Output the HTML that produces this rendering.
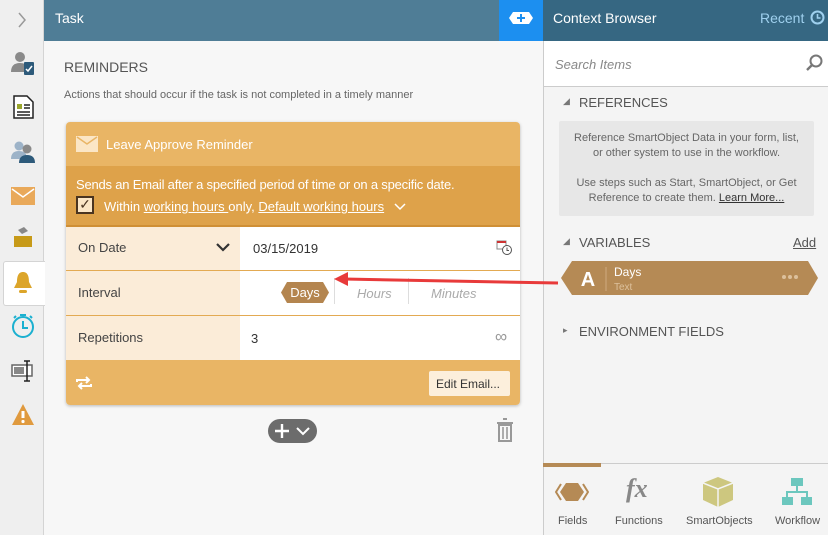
<!DOCTYPE html>
<html><head><style>
*{box-sizing:border-box;margin:0;padding:0}
body{width:828px;height:535px;overflow:hidden;font-family:"Liberation Sans",sans-serif;background:#f7f7f7;position:relative;font-size:13px;color:#444}
.a{position:absolute}
</style></head><body>
<!-- left sidebar -->
<div class="a" style="left:0;top:0;width:44px;height:535px;background:#efefef;border-right:1px solid #d4d4d4"></div>
<svg class="a" style="left:17px;top:11px" width="10" height="18"><path d="M2 2l6 7-6 7" stroke="#999" stroke-width="1.5" fill="none"/></svg>
<svg class="a" style="left:10px;top:50px" width="26" height="28"><circle cx="10" cy="7" r="5" fill="#8a8a8a"/><path d="M1 22 q0-9 9-9 q6 0 8 4 v5z" fill="#8a8a8a"/><rect x="14" y="12" width="10" height="13" rx="1" fill="#2d5a7a"/><path d="M16 19 l2 2 4-5" stroke="#fff" fill="none" stroke-width="1.5"/></svg>
<svg class="a" style="left:13px;top:95px" width="22" height="24"><path d="M1 1h13l6 6v16H1z" fill="#fff" stroke="#222" stroke-width="1.5"/><rect x="4" y="9" width="5" height="5" fill="#9aa62c"/><path d="M11 10h6M11 13h6M4 17h13M4 20h13" stroke="#222" stroke-width="1.5"/></svg>
<svg class="a" style="left:11px;top:140px" width="26" height="24"><circle cx="8" cy="6" r="4.5" fill="#9db3c8"/><path d="M0 19q0-8 8-8q5 0 7 3v5z" fill="#9db3c8"/><circle cx="16" cy="9" r="4.5" fill="#8a8a8a"/><path d="M8 23q0-8 8-8t8 8z" fill="#2d5a7a"/></svg>
<svg class="a" style="left:11px;top:187px" width="24" height="18"><rect width="24" height="18" fill="#e9a95a"/><path d="M1 2l11 8 11-8" stroke="#fff" fill="none" stroke-width="1.5"/></svg>
<svg class="a" style="left:13px;top:226px" width="20" height="22"><path d="M5 4l6-3 4 4-6 3z" fill="#888"/><rect x="1" y="10" width="18" height="11" fill="#c79a18"/></svg>
<div class="a" style="left:3px;top:261px;width:42px;height:45px;background:#fff;border:1px solid #d4d4d4;border-right:none;border-radius:3px 0 0 3px"></div>
<svg class="a" style="left:13px;top:270px" width="20" height="26"><path d="M10 2c-5 0-6 5-6 10l-3 6h18l-3-6c0-5-1-10-6-10z" fill="#dca52a"/><rect x="6" y="20" width="8" height="3" rx="1.5" fill="#dca52a"/></svg>
<svg class="a" style="left:11px;top:313px" width="24" height="26"><circle cx="12" cy="14" r="10" fill="none" stroke="#1bb0d0" stroke-width="2"/><path d="M12 8v7h5M9 2h6M3 5l2-2M21 5l-2-2" stroke="#1bb0d0" stroke-width="2" fill="none"/></svg>
<svg class="a" style="left:11px;top:360px" width="24" height="22"><rect x="1" y="5" width="20" height="11" fill="#fff" stroke="#666" stroke-width="1.5"/><rect x="3" y="7" width="10" height="7" fill="#888"/><path d="M16 1v20M13 1h6M13 21h6" stroke="#222" stroke-width="1.5"/></svg>
<svg class="a" style="left:11px;top:403px" width="24" height="24"><path d="M12 1l11 21H1z" fill="#e09a3e"/><path d="M12 8v7" stroke="#fff" stroke-width="3"/><circle cx="12" cy="18.5" r="1.6" fill="#fff"/></svg>

<!-- headers -->
<div class="a" style="left:44px;top:0;width:455px;height:41px;background:#4f7d96;color:#fff;font-size:14px;padding:10px 0 0 11px">Task</div>
<div class="a" style="left:499px;top:0;width:44px;height:41px;background:#1c8ff0"></div>
<svg class="a" style="left:508px;top:11px" width="26" height="14"><path d="M5 1h16l4 6-4 6H5L1 7z" fill="#fff"/><path d="M13 3v8M9 7h8" stroke="#1c8ff0" stroke-width="2"/></svg>
<div class="a" style="left:543px;top:0;width:285px;height:41px;background:#366782;color:#fff;font-size:14px;padding:10px 0 0 10px">Context Browser</div>
<div class="a" style="left:760px;top:10px;color:#9fd0ee;font-size:14px">Recent</div>
<svg class="a" style="left:810px;top:10px" width="15" height="15"><circle cx="7.5" cy="7.5" r="6" fill="none" stroke="#9fd0ee" stroke-width="2"/><path d="M7.5 4v4h3" stroke="#9fd0ee" stroke-width="1.6" fill="none"/></svg>

<!-- main -->
<div class="a" style="left:64px;top:59px;font-size:14px;color:#555">REMINDERS</div>
<div class="a" style="left:64px;top:89px;font-size:11px;color:#666">Actions that should occur if the task is not completed in a timely manner</div>

<div class="a" style="left:66px;top:122px;width:454px;height:283px;border-radius:4px;box-shadow:0 1px 3px rgba(0,0,0,.25);overflow:hidden;background:#fff">
 <div class="a" style="left:0;top:0;width:454px;height:44px;background:#e9b565"></div>
 <svg class="a" style="left:10px;top:14px" width="22" height="16"><rect width="22" height="16" fill="#fbe6c6"/><path d="M1 1l10 7 10-7" stroke="#e9b565" fill="none" stroke-width="1.5"/></svg>
 <div class="a" style="left:40px;top:15px;color:#fff;font-size:13px">Leave Approve Reminder</div>
 <div class="a" style="left:0;top:44px;width:454px;height:61px;background:#dea24a;border-bottom:2px solid #cf8f35"></div>
 <div class="a" style="left:10px;top:55px;color:#fff;font-size:13px;letter-spacing:-0.2px">Sends an Email after a specified period of time or on a specific date.</div>
 <div class="a" style="left:10px;top:74px;width:18px;height:18px;background:#fbe6c6;border:2px solid #4a3420;color:#4a3420;font-size:14px;line-height:13px;text-align:center">&#10003;</div>
 <div class="a" style="left:38px;top:77px;color:#fff;font-size:13px">Within <u>working hours </u>only, <u>Default working hours</u></div>
 <svg class="a" style="left:328px;top:81px" width="12" height="8"><path d="M1 1l5 5 5-5" stroke="#fff" stroke-width="1.5" fill="none"/></svg>
 <div class="a" style="left:0;top:105px;width:174px;height:133px;background:#fbecd8"></div>
 <div class="a" style="left:0;top:148px;width:454px;height:1px;background:#e3aa52"></div>
 <div class="a" style="left:0;top:193px;width:454px;height:1px;background:#e3aa52"></div>
 <div class="a" style="left:12px;top:118px;font-size:13px;color:#444">On Date</div>
 <svg class="a" style="left:150px;top:120px" width="14" height="10"><path d="M1 2l6 6 6-6" stroke="#333" stroke-width="2.2" fill="none"/></svg>
 <div class="a" style="left:187px;top:119px;font-size:13px;color:#333">03/15/2019</div>
 <svg class="a" style="left:430px;top:117px" width="16" height="16"><rect x="1" y="2" width="9" height="8" fill="none" stroke="#888"/><path d="M1 2h9v2H1z" fill="#c33"/><circle cx="11" cy="11" r="4.5" fill="#fff" stroke="#555"/><path d="M11 8.5v3h2" stroke="#555" fill="none"/></svg>
 <div class="a" style="left:12px;top:163px;font-size:13px;color:#444">Interval</div>
 <svg class="a" style="left:214px;top:160px" width="50" height="21"><path d="M7 0h36l6 10.5-6 10.5H7L1 10.5z" fill="#b4854f"/><text x="25" y="15" text-anchor="middle" fill="#fff" font-size="13" font-family="Liberation Sans">Days</text></svg>
 <div class="a" style="left:268px;top:156px;width:1px;height:26px;background:#ddd"></div>
 <div class="a" style="left:291px;top:164px;font-size:13px;color:#aaa;font-style:italic">Hours</div>
 <div class="a" style="left:342px;top:156px;width:1px;height:26px;background:#ddd"></div>
 <div class="a" style="left:365px;top:164px;font-size:13px;color:#aaa;font-style:italic">Minutes</div>
 <div class="a" style="left:12px;top:208px;font-size:13px;color:#444">Repetitions</div>
 <div class="a" style="left:185px;top:209px;font-size:13px;color:#333">3</div>
 <div class="a" style="left:429px;top:205px;font-size:17px;color:#999">&#8734;</div>
 <div class="a" style="left:0;top:238px;width:454px;height:45px;background:#e9b565"></div>
 <svg class="a" style="left:9px;top:253px" width="18" height="16"><path d="M2 7V5h12M11 2l3 3-3 3M16 9v2H4M7 14l-3-3 3-3" stroke="#fff" stroke-width="2" fill="none"/></svg>
 <div class="a" style="left:363px;top:249px;width:81px;height:25px;background:#fcefdc;border-radius:2px;font-size:12px;color:#333;padding:6px 0 0 7px;white-space:nowrap">Edit Email...</div>
</div>

<div class="a" style="left:268px;top:419px;width:49px;height:24px;background:#6c6c6c;border-radius:12px"></div>
<svg class="a" style="left:272px;top:421px" width="44" height="20"><path d="M10 3v14M3 10h14" stroke="#fff" stroke-width="2.4"/><path d="M25 7l6 6 6-6" stroke="#fff" stroke-width="2" fill="none"/></svg>
<svg class="a" style="left:496px;top:418px" width="18" height="25"><path d="M7 1h4M1 5h16" stroke="#999" stroke-width="2"/><rect x="3" y="7" width="12" height="16" fill="none" stroke="#999" stroke-width="2"/><path d="M7 9v12M11 9v12" stroke="#999" stroke-width="1.6"/></svg>

<!-- right panel -->
<div class="a" style="left:543px;top:41px;width:285px;height:494px;background:#f4f4f4;border-left:1px solid #ccc"></div>
<div class="a" style="left:543px;top:41px;width:285px;height:46px;background:#fff;border-left:1px solid #ccc;border-bottom:1px solid #ccc"></div>
<div class="a" style="left:555px;top:57px;font-size:13px;color:#888;font-style:italic">Search Items</div>
<svg class="a" style="left:806px;top:54px" width="18" height="18"><circle cx="10" cy="7" r="5.5" fill="none" stroke="#777" stroke-width="2"/><path d="M6 11l-5 5" stroke="#777" stroke-width="2.4"/></svg>
<div class="a" style="left:563px;top:96px;font-size:9px;color:#777">&#9698;</div>
<div class="a" style="left:579px;top:95px;font-size:13px;color:#555">REFERENCES</div>
<div class="a" style="left:559px;top:121px;width:255px;height:95px;background:#e7e7e7;border-radius:2px;font-size:11px;color:#666;text-align:center;line-height:15px;padding-top:10px">Reference SmartObject Data in your form, list,<br>or other system to use in the workflow.<br><div style="height:15px"></div>Use steps such as Start, SmartObject, or Get<br>Reference to create them. <u style="color:#333">Learn More...</u></div>
<div class="a" style="left:563px;top:236px;font-size:9px;color:#777">&#9698;</div>
<div class="a" style="left:579px;top:235px;font-size:13px;color:#555">VARIABLES</div>
<div class="a" style="left:793px;top:235px;font-size:13px;color:#555;text-decoration:underline">Add</div>
<svg class="a" style="left:560px;top:260px" width="260" height="36"><path d="M12 1h236l10 17-10 17H12L1 18z" fill="#b58a55"/><path d="M46 7v24" stroke="#d0ab7e"/><text x="28" y="26" text-anchor="middle" fill="#fff" font-size="20" font-weight="bold" font-family="Liberation Sans">A</text><text x="54" y="16" fill="#fff" font-size="12" font-family="Liberation Sans">Days</text><text x="54" y="30" fill="#dcc09c" font-size="10" font-family="Liberation Sans">Text</text><circle cx="224" cy="17" r="2" fill="#dcc09c"/><circle cx="230" cy="17" r="2" fill="#dcc09c"/><circle cx="236" cy="17" r="2" fill="#dcc09c"/></svg>
<div class="a" style="left:563px;top:325px;font-size:9px;color:#777">&#9656;</div>
<div class="a" style="left:579px;top:324px;font-size:13px;color:#555">ENVIRONMENT FIELDS</div>

<div class="a" style="left:543px;top:463px;width:285px;height:1px;background:#ccc"></div>
<div class="a" style="left:543px;top:463px;width:58px;height:4px;background:#b58a55"></div>
<svg class="a" style="left:555px;top:481px" width="34" height="22"><path d="M11 2h12l6 9-6 9H11L5 11z" fill="#b58a55"/><path d="M6 3L1 11l5 8M28 3l5 8-5 8" stroke="#b58a55" stroke-width="2" fill="none"/></svg>
<div class="a" style="left:626px;top:474px;font-family:'Liberation Serif',serif;font-style:italic;font-weight:bold;font-size:26px;color:#888">fx</div>
<svg class="a" style="left:702px;top:476px" width="32" height="32"><path d="M16 1l15 6v17l-15 7-15-7V7z" fill="#cdc77f"/><path d="M1 7l15 6 15-6M16 13v18" stroke="#f4f4f4" stroke-width="1.5" fill="none"/></svg>
<svg class="a" style="left:781px;top:477px" width="32" height="32"><rect x="10" y="1" width="12" height="8" fill="#6cc7be"/><rect x="1" y="20" width="11" height="8" fill="#6cc7be"/><rect x="20" y="20" width="11" height="8" fill="#6cc7be"/><path d="M16 9v6M6 20v-5h20v5" stroke="#6cc7be" stroke-width="2" fill="none"/></svg>
<div class="a" style="left:558px;top:515px;font-size:11px;color:#555">Fields</div>
<div class="a" style="left:615px;top:515px;font-size:11px;color:#555">Functions</div>
<div class="a" style="left:686px;top:515px;font-size:11px;color:#555">SmartObjects</div>
<div class="a" style="left:775px;top:515px;font-size:11px;color:#555">Workflow</div>

<!-- red arrow -->
<svg class="a" style="left:330px;top:270px" width="232" height="24"><path d="M228 13L14 9" stroke="#e83a3a" stroke-width="3"/><path d="M4 9l14-7v14z" fill="#e83a3a"/></svg>
</body></html>
